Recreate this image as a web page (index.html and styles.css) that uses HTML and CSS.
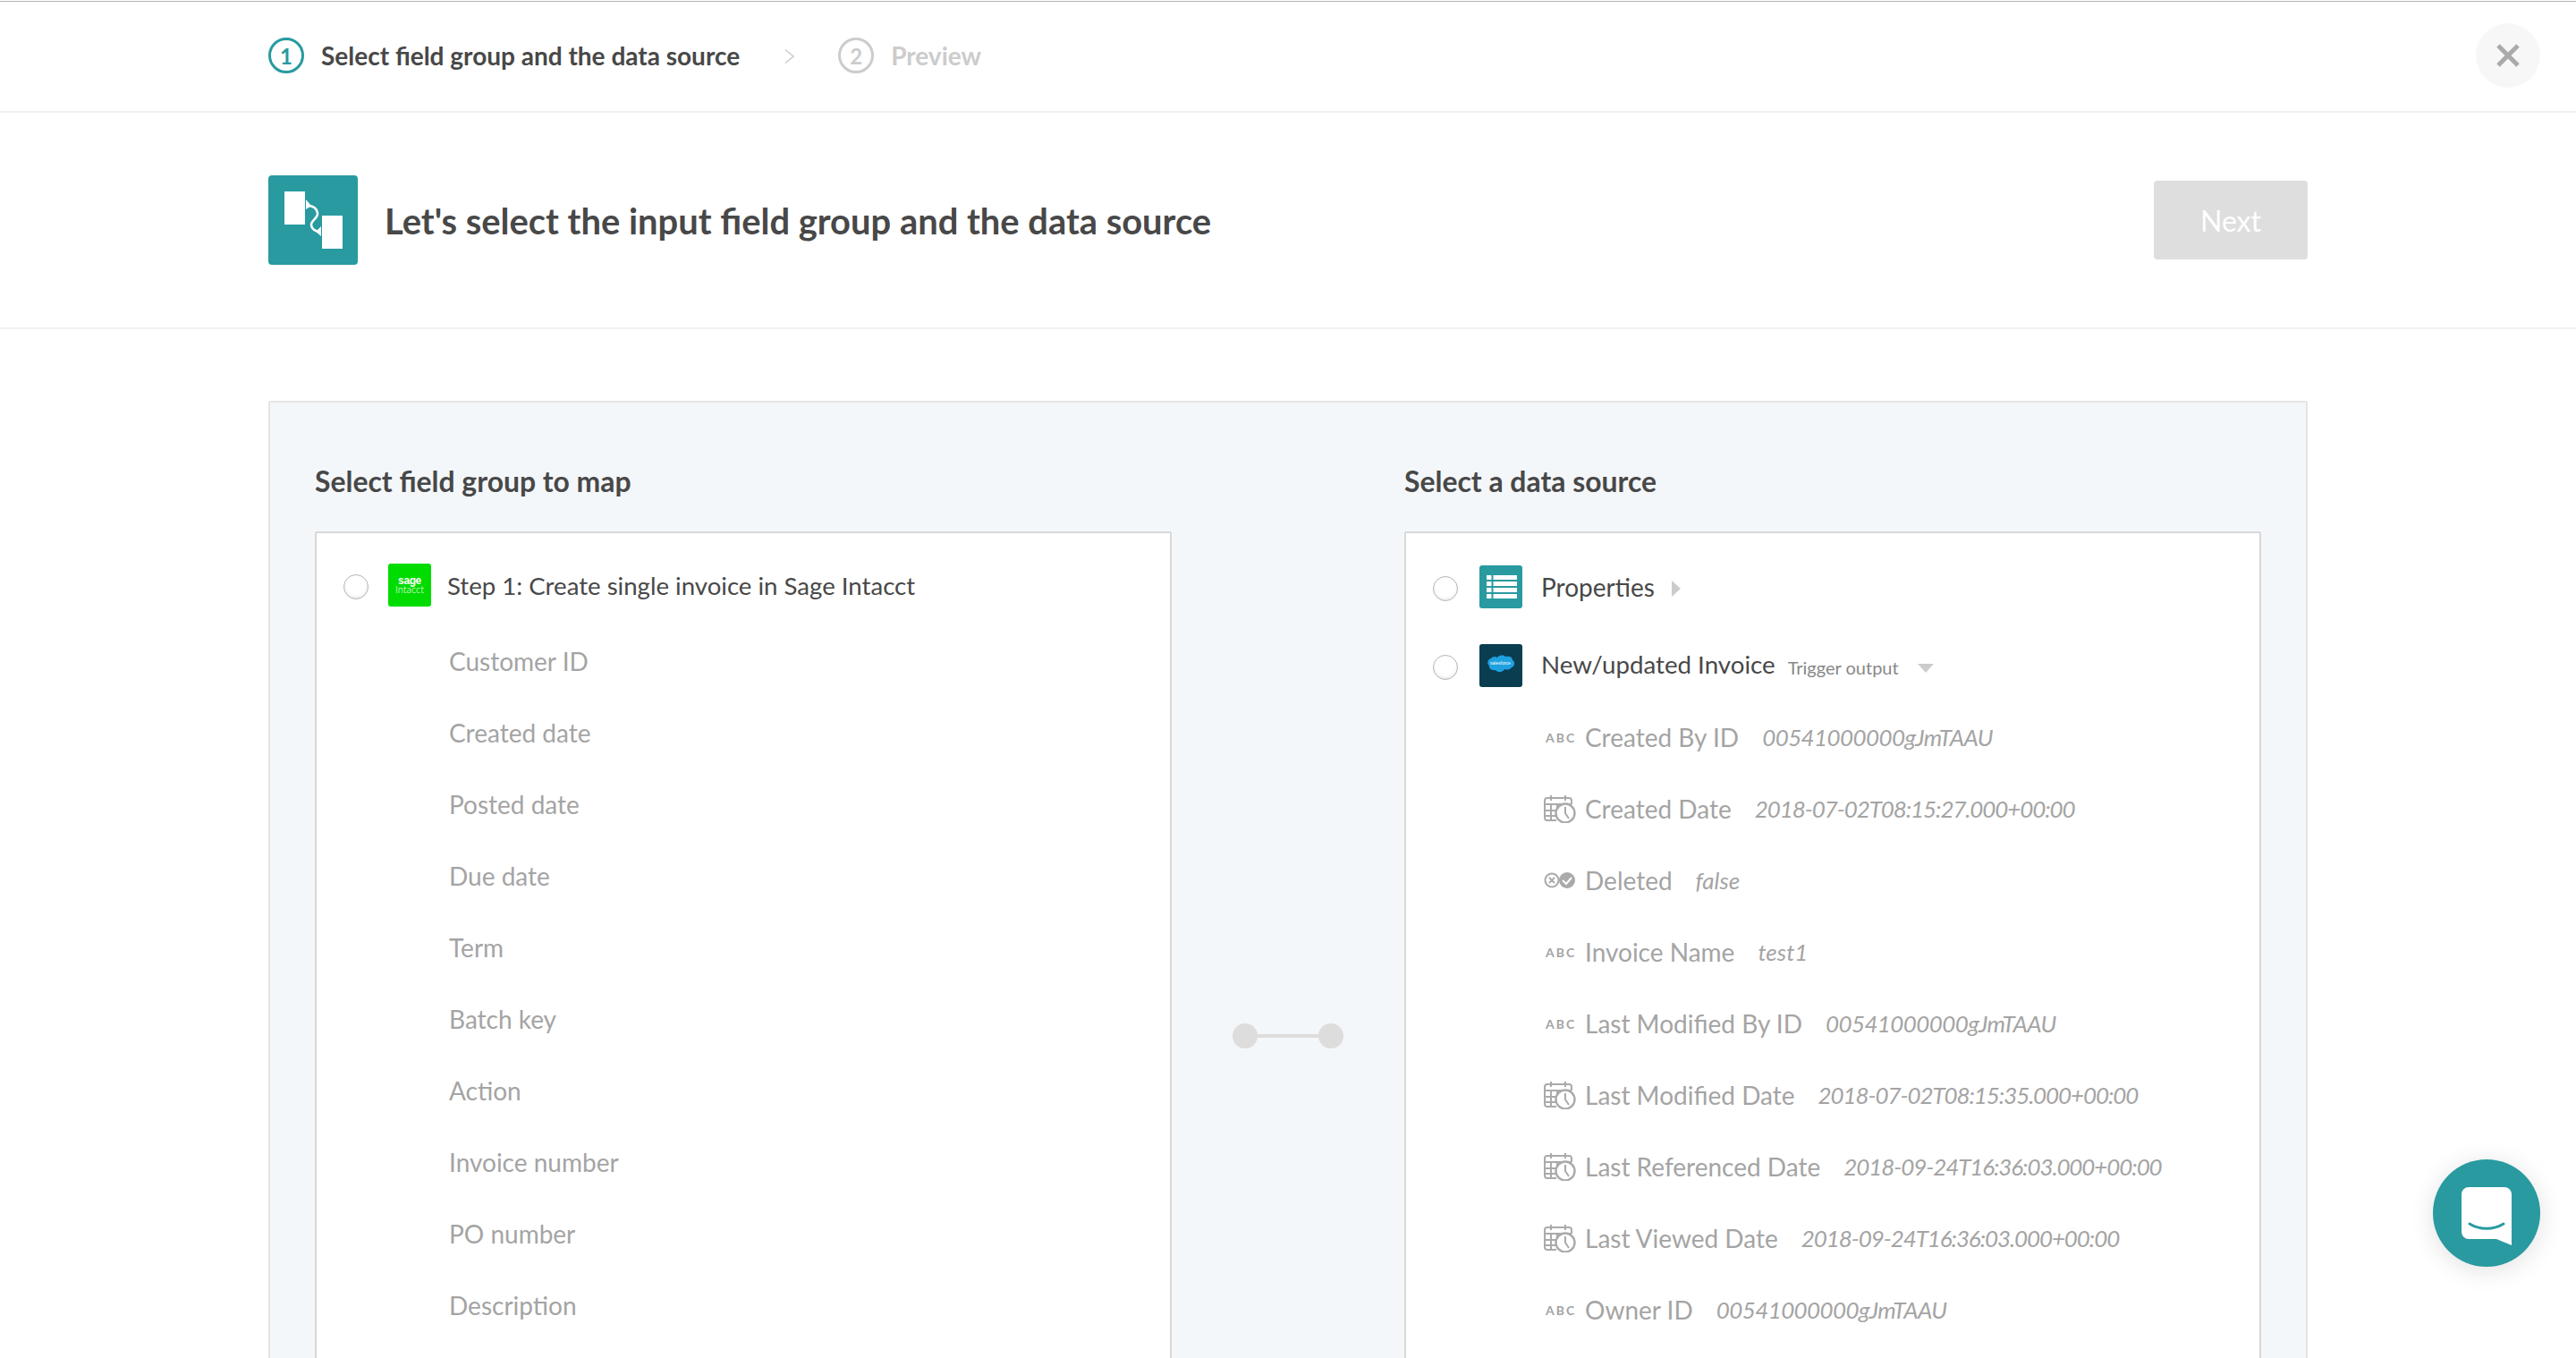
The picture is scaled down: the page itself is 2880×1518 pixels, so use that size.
FILE: index.html
```html
<!DOCTYPE html>
<html lang="en">
<head>
    <meta charset="UTF-8">
    <meta name="viewport" content="width=device-width, initial-scale=1.0">
    <title>Select field group and the data source</title>
    <link rel="stylesheet" href="styles.css">
</head>
<body>
    <svg class="defs" width="0" height="0">
        <defs>
            <g id="calendar" fill="none" stroke="#aaa" stroke-width="2">
                <path d="M14 29H4a3 3 0 0 1-3-3V7a3 3 0 0 1 3-3h24a3 3 0 0 1 3 3v4"/>
                <path d="M1 11h30M8 1v6M24 1v6M1 18h13M1 24h13M8 11v18M15 11v8"/>
                <circle cx="24" cy="21" r="10.5" fill="#fff" stroke-width="2.4"/>
                <path d="M24 14v7l4 6"/>
            </g>
        </defs>
    </svg>

    <header class="steps-bar">
        <ol class="steps">
            <li class="step step-active"><span class="step-num">1</span>Select field group and the data source</li>
            <li class="step-sep">
                <svg width="11" height="16" viewBox="0 0 11 16"><path d="M1 .5 10 8l-9 7.5" fill="none" stroke="#ccc" stroke-width="1.5"/></svg>
            </li>
            <li class="step"><span class="step-num">2</span>Preview</li>
        </ol>
        <button class="close-btn" aria-label="Close">
            <svg width="26" height="26" viewBox="0 0 26 26"><path d="M2 2l22 22M24 2 2 24" stroke="#aaa" stroke-width="5"/></svg>
        </button>
    </header>

    <section class="hero">
        <div class="hero-title">
            <svg class="hero-icon" width="100" height="100" viewBox="0 0 100 100">
                <rect width="100" height="100" rx="4" fill="#289aa0"/>
                <rect x="18" y="18" width="23" height="37" fill="#fff"/>
                <rect x="60" y="45" width="23" height="37" fill="#fff"/>
                <path d="M44 34c6 0 10 3 11 8 1 6-7 8-7 13 0 5 5 8 10 8" fill="none" stroke="#fff" stroke-width="2.5"/>
                <path d="M42 27l6 7-6 4zM59 57v11l-6-5z" fill="#fff"/>
            </svg>
            <h1>Let's select the input field group and the data source</h1>
        </div>
        <button class="next-btn" disabled>Next</button>
    </section>

    <main class="panel">
        <h2 class="col-title">Select field group to map</h2>
        <span></span>
        <h2 class="col-title">Select a data source</h2>

        <div class="box box-left">
            <div class="app-row">
                <input type="radio" class="radio" name="group">
                <span class="logo logo-sage"><b>sage</b><i>Intacct</i></span>
                <span class="app-name">Step 1: Create single invoice in Sage Intacct</span>
            </div>
            <ul class="fields">
                <li>Customer ID</li>
                <li>Created date</li>
                <li>Posted date</li>
                <li>Due date</li>
                <li>Term</li>
                <li>Batch key</li>
                <li>Action</li>
                <li>Invoice number</li>
                <li>PO number</li>
                <li>Description</li>
            </ul>
        </div>

        <div class="connector"><span class="dot"></span><span class="wire"></span><span class="dot"></span></div>

        <div class="box box-right">
            <div class="app-row">
                <input type="radio" class="radio" name="source">
                <svg class="logo" width="48" height="48" viewBox="0 0 48 48">
                    <rect width="48" height="48" rx="3" fill="#289aa0"/>
                    <path d="M8 11h5.500v5H8zM15.500 11H42v5H15.500zM8 18h5.500v5H8zM15.500 18H42v5H15.500zM8 25h5.500v5H8zM15.500 25H42v5H15.500zM8 32h5.500v5H8zM15.500 32H42v5H15.500z" fill="#fff"/>
                </svg>
                <span class="app-name">Properties</span>
                <span class="tri-right"></span>
            </div>
            <div class="app-row">
                <input type="radio" class="radio" name="source">
                <svg class="logo" width="48" height="48" viewBox="0 0 48 48">
                    <rect width="48" height="48" rx="3" fill="#0a3d50"/>
                    <path d="M20 15c2-3 7-3 9-1 4-1 8 0 8 4 3 1 3 7-1 8-2 3-6 3-8 2-2 4-8 4-10 1-4 1-8-2-7-5-3-2-2-7 2-8 1-2 5-3 7-1z" fill="#1ea1e0"/>
                    <text x="23.500" y="23" class="sf-text">salesforce</text>
                </svg>
                <span class="app-name app-name-up">New/updated Invoice</span>
                <span class="app-tag">Trigger output</span>
                <span class="tri-down"></span>
            </div>
            <ul class="props">
                <li><span class="type-abc">ABC</span><span class="prop-name">Created By ID</span><em class="num">00541000000gJmTAAU</em></li>
                <li><svg class="type-icon" width="36" height="32" viewBox="0 0 36 32"><use href="#calendar"/></svg><span class="prop-name">Created Date</span><em class="date">2018-07-02T08:15:27.000+00:00</em></li>
                <li>
                    <svg class="type-icon" width="36" height="18" viewBox="0 0 36 18">
                        <circle cx="9" cy="9" r="7.500" fill="none" stroke="#aaa" stroke-width="2"/>
                        <path d="M6 6l6 6M12 6l-6 6" stroke="#aaa" stroke-width="2"/>
                        <circle cx="26" cy="9" r="9" fill="#aaa"/>
                        <path d="M21 9l4 4 6-7" fill="none" stroke="#fff" stroke-width="2"/>
                    </svg>
                    <span class="prop-name">Deleted</span><em>false</em>
                </li>
                <li><span class="type-abc">ABC</span><span class="prop-name">Invoice Name</span><em>test1</em></li>
                <li><span class="type-abc">ABC</span><span class="prop-name">Last Modified By ID</span><em class="num">00541000000gJmTAAU</em></li>
                <li><svg class="type-icon" width="36" height="32" viewBox="0 0 36 32"><use href="#calendar"/></svg><span class="prop-name">Last Modified Date</span><em class="date">2018-07-02T08:15:35.000+00:00</em></li>
                <li><svg class="type-icon" width="36" height="32" viewBox="0 0 36 32"><use href="#calendar"/></svg><span class="prop-name">Last Referenced Date</span><em class="date">2018-09-24T16:36:03.000+00:00</em></li>
                <li><svg class="type-icon" width="36" height="32" viewBox="0 0 36 32"><use href="#calendar"/></svg><span class="prop-name">Last Viewed Date</span><em class="date">2018-09-24T16:36:03.000+00:00</em></li>
                <li><span class="type-abc">ABC</span><span class="prop-name">Owner ID</span><em class="num">00541000000gJmTAAU</em></li>
            </ul>
        </div>
    </main>

    <button class="chat-btn" aria-label="Chat">
        <svg width="56" height="65" viewBox="0 0 56 65">
            <path d="M8 0h40a8 8 0 0 1 8 8v57l-17-7H8a8 8 0 0 1-8-8V8a8 8 0 0 1 8-8z" fill="#fff"/>
            <path d="M9 41c11 7 27 7 38 0" fill="none" stroke="#289aa0" stroke-width="3" stroke-linecap="round"/>
        </svg>
    </button>
</body>
</html>
```

FILE: styles.css
```css
* {
    box-sizing: border-box;
}
html, body {
    height: 100%;
}
body {
    margin: 0;
    overflow: hidden;
    background-color: #fff;
    color: #484848;
    font-family: Lato, "Open Sans", sans-serif;
}
ul, ol {
    list-style: none;
    margin: 0;
    padding: 0;
}
button {
    border: 0;
    padding: 0;
    font-family: inherit;
}
.defs {
    position: absolute;
}

/* top steps bar */
.steps-bar {
    display: flex;
    align-items: center;
    justify-content: space-between;
    height: 125px;
    margin-top: 1px;
    padding: 0 40px 2px 300px;
    border-top: 1px solid #b4b4b4;
    border-bottom: 2px solid #f1f1f1;
}
.steps {
    display: flex;
    align-items: center;
}
.step {
    display: flex;
    align-items: center;
    gap: 19px;
    font-size: 28px;
    font-weight: 700;
    color: #ccc;
}
.step-active {
    color: #484848;
}
.step-num {
    display: flex;
    align-items: center;
    justify-content: center;
    width: 40px;
    height: 40px;
    border: 3px solid #ccc;
    border-radius: 50%;
    font-size: 24px;
}
.step-active .step-num {
    border-color: #289aa0;
    color: #289aa0;
}
.step-sep {
    display: flex;
    margin: 2px 49px 0 50px;
}
.close-btn {
    display: flex;
    align-items: center;
    justify-content: center;
    width: 72px;
    height: 72px;
    border-radius: 50%;
    background-color: #f7f7f7;
}

/* title row */
.hero {
    display: flex;
    align-items: center;
    justify-content: space-between;
    height: 242px;
    padding: 0 300px;
    border-bottom: 2px solid #f1f1f1;
}
.hero-title {
    display: flex;
    align-items: center;
    gap: 30px;
}
.hero-icon {
    display: block;
}
.hero h1 {
    margin: 0;
    font-size: 39.9px;
    font-weight: 700;
}
.next-btn {
    width: 172px;
    height: 88px;
    border-radius: 4px;
    background-color: #dedede;
    color: #fff;
    font-size: 32px;
}

/* main panel */
.panel {
    display: grid;
    grid-template-columns: 958px 1fr 958px;
    grid-template-rows: 144px 1128px;
    width: 2280px;
    margin: 80px auto 0;
    padding: 0 50px;
    border: 2px solid #e4e4e4;
    border-radius: 2px;
    background-color: #f4f7fa;
}
.col-title {
    align-self: end;
    margin: 0 0 37px;
    font-size: 31.9px;
    font-weight: 700;
}
.box {
    border: 2px solid #d8d8d8;
    border-radius: 2px;
    background-color: #fff;
}
.box-left {
    padding: 34px 30px 0;
}
.box-right {
    padding: 36px 30px 0;
}
.app-row {
    display: flex;
    align-items: center;
    height: 48px;
    margin-bottom: 40px;
    font-size: 28px;
}
.box-left .app-row {
    margin-bottom: 21px;
}
.box-left .app-name {
    font-size: 27.6px;
}
.app-name-up {
    margin-bottom: 4px;
    font-size: 27.7px;
}
.radio {
    flex: none;
    width: 28px;
    height: 28px;
    margin: 4px 24px 0 0;
    border: 1.5px solid #b5b5b5;
    border-radius: 50%;
    appearance: none;
    background-color: #fff;
    box-shadow: inset 0 -2px 3px rgba(0, 0, 0, 0.08);
}
.box-left .radio {
    margin-right: 22px;
}
.logo {
    flex: none;
    display: block;
    margin-right: 21px;
}
.box-left .logo {
    margin-right: 18px;
}
.logo-sage {
    display: flex;
    flex-direction: column;
    align-items: center;
    justify-content: center;
    width: 48px;
    height: 48px;
    border-radius: 3px;
    background-color: #00dc00;
    color: #fff;
    font-family: "Liberation Sans", sans-serif;
    line-height: 10px;
}
.logo-sage b {
    font-size: 12px;
    letter-spacing: -0.4px;
}
.logo-sage i {
    font-size: 11px;
    font-style: normal;
    font-family: Lato, sans-serif;
    font-weight: 300;
}
.sf-text {
    fill: #fff;
    font-size: 5px;
    text-anchor: middle;
    font-family: "Liberation Sans", sans-serif;
}
.tri-right {
    width: 0;
    height: 0;
    margin: 4px 0 0 19px;
    border-top: 9px solid transparent;
    border-bottom: 9px solid transparent;
    border-left: 10px solid #ccc;
}
.app-tag {
    margin: 4px 0 0 14px;
    color: #888;
    font-size: 20px;
}
.tri-down {
    width: 0;
    height: 0;
    margin: 6px 0 0 21px;
    border-left: 9px solid transparent;
    border-right: 9px solid transparent;
    border-top: 10px solid #ccc;
}
.fields li {
    display: flex;
    align-items: center;
    height: 80px;
    padding-left: 118px;
    color: #a4a4a4;
    font-size: 28px;
}
.props {
    margin-top: -24px;
}
.props li {
    display: flex;
    align-items: center;
    height: 80px;
    padding-left: 124px;
    color: #a4a4a4;
    font-size: 28px;
}
.type-abc {
    flex: none;
    width: 36px;
    padding-left: 2px;
    font-size: 14px;
    font-weight: 700;
    letter-spacing: 2px;
}
.type-icon {
    flex: none;
    display: block;
}
.prop-name {
    margin: 0 26px 0 10px;
}
.props em {
    font-size: 26px;
    font-style: italic;
}
.props em.num {
    letter-spacing: -0.6px;
}
.props em.date {
    letter-spacing: -1.1px;
}

/* between the two boxes */
.connector {
    display: flex;
    align-items: center;
    justify-content: center;
}
.dot {
    width: 28px;
    height: 28px;
    border-radius: 50%;
    background-color: #ddd;
}
.wire {
    width: 68px;
    height: 4px;
    background-color: #ddd;
}

.chat-btn {
    position: fixed;
    right: 40px;
    bottom: 102px;
    display: flex;
    align-items: center;
    justify-content: center;
    width: 120px;
    height: 120px;
    padding-top: 7px;
    border-radius: 50%;
    background-color: #289aa0;
    box-shadow: 0 4px 28px rgba(0, 0, 0, 0.12);
}
```
